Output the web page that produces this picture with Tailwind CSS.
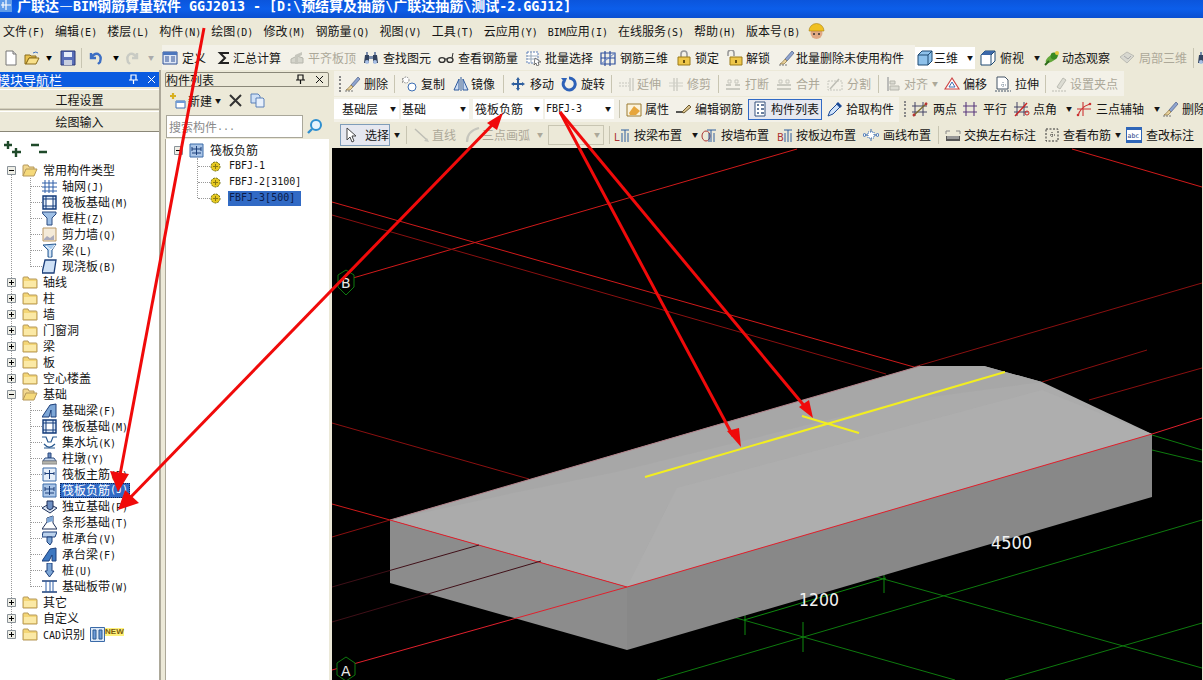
<!DOCTYPE html>
<html lang="zh-CN">
<head>
<meta charset="UTF-8">
<title>广联达钢筋算量软件</title>
<script src="https://cdn.jsdelivr.net/npm/@tailwindcss/browser@4"></script>
</head>
<body class="overflow-hidden">

<!-- icon sheet -->
<svg class="hidden">
  <symbol id="i-new" viewBox="0 0 16 16"><path d="M3 1h7l3 3v11H3z" fill="#fff" stroke="#777"/><path d="M10 1v3h3" fill="#ddd" stroke="#777"/></symbol>
  <symbol id="i-open" viewBox="0 0 16 16"><path d="M1 14V5h5l1 1h5v2H5L2 14z" fill="#e8c14e" stroke="#8a6d1c"/><path d="M2 14l3-6h10l-3 6z" fill="#f8e08a" stroke="#8a6d1c"/><path d="M9 3q3-2 5 0" fill="none" stroke="#3a6fc0"/></symbol>
  <symbol id="i-save" viewBox="0 0 16 16"><path d="M1 1h14v14H1z" fill="#5a6fb8" stroke="#2c3a78"/><path d="M4 2h8v5H4z" fill="#e8eefa"/><path d="M4 10h8v5H4z" fill="#c8cfe0"/></symbol>
  <symbol id="i-undo" viewBox="0 0 16 16"><path d="M3 3v5h5M3 8q3-5 7-4 4 2 2 8l-2 2" fill="none" stroke="#3d6fc4" stroke-width="2.4"/></symbol>
  <symbol id="i-redo" viewBox="0 0 16 16"><path d="M13 3v5H8M13 8q-3-5-7-4-4 2-2 8l2 2" fill="none" stroke="#c9cbc4" stroke-width="2.4"/></symbol>
  <symbol id="i-define" viewBox="0 0 16 16"><path d="M1 2h14v12H1z" fill="#dfe7f6" stroke="#2d4f94"/><path d="M1 2h14v3H1z" fill="#4c76bd"/><path d="M3 7h4M3 9h4M3 11h4M9 7h4M9 9h4M9 11h4" stroke="#2d4f94"/></symbol>
  <symbol id="i-sigma" viewBox="0 0 16 16"><path d="M13 3H4l5 5-5 5h9" fill="none" stroke="#222" stroke-width="2"/></symbol>
  <symbol id="i-flat" viewBox="0 0 16 16"><path d="M2 9l6-3 6 2v5H2z" fill="#d5d5cc" stroke="#b5b5ac"/><path d="M6 14V5l7-3v3l-4 2v7z" fill="#c6c6bd"/></symbol>
  <symbol id="i-find" viewBox="0 0 16 16"><path d="M2 5h4v8H1zM10 5h4l1 8h-5z" fill="#33435f"/><path d="M3 2h2v3H3zM11 2h2v3h-2zM6 6h4v3H6z" fill="#7a8cab"/><circle cx="4" cy="12" r="2" fill="#a9c0e6"/><circle cx="12" cy="12" r="2" fill="#a9c0e6"/></symbol>
  <symbol id="i-glasses" viewBox="0 0 16 16"><ellipse cx="4" cy="10" rx="3" ry="2.4" fill="none" stroke="#333" stroke-width="1.4"/><ellipse cx="12" cy="10" rx="3" ry="2.4" fill="none" stroke="#333" stroke-width="1.4"/><path d="M7 9h2M14 8l1-5" stroke="#333"/></symbol>
  <symbol id="i-batch" viewBox="0 0 16 16"><path d="M1 2h11v11H1z" fill="#fff" stroke="#5d7fb8" stroke-dasharray="2 1"/><path d="M1 6h11M1 9h11M5 2v11" stroke="#9ab" /><path d="M9 8l6 4-3 0 1 3-2 1-1-3-2 2z" fill="#fff" stroke="#444" stroke-width=".7"/></symbol>
  <symbol id="i-rebar3d" viewBox="0 0 16 16"><path d="M1 3h14v11H1zM5 1v15M10 1v15M1 8h14" fill="none" stroke="#2e4e9c" stroke-width="1.2"/><path d="M1 14L15 3" stroke="#5f7fc4"/></symbol>
  <symbol id="i-lock" viewBox="0 0 16 16"><path d="M5 7V4a3 3 0 016 0v3" fill="none" stroke="#999" stroke-width="1.6"/><path d="M2 7h12v8H2z" fill="#eec64a" stroke="#9b7a18"/><path d="M7 10h2v3H7z" fill="#6b5210"/></symbol>
  <symbol id="i-unlock" viewBox="0 0 16 16"><path d="M1 6V3a3 3 0 016 0v3" fill="none" stroke="#999" stroke-width="1.6"/><path d="M3 7h12v8H3z" fill="#eec64a" stroke="#9b7a18"/><path d="M8 10h2v3H8z" fill="#6b5210"/></symbol>
  <symbol id="i-brush" viewBox="0 0 16 16"><path d="M6 9l7-8 2 2-7 8z" fill="#8ea4cf" stroke="#4d5f88" stroke-width=".7"/><path d="M6 9l2 2-3 3-4 0q3-2 5-5z" fill="#e9d19a" stroke="#8a7340" stroke-width=".7"/><path d="M0 15h8" stroke="#777" stroke-dasharray="2 1"/></symbol>
  <symbol id="i-cube" viewBox="0 0 16 16"><path d="M1 5l4-4h10v10l-4 4H1z" fill="#8ec1ea" stroke="#1e4a72"/><path d="M1 5h10l4-4M11 5v10" fill="none" stroke="#1e4a72"/></symbol>
  <symbol id="i-cubetop" viewBox="0 0 16 16"><path d="M1 5l4-4h10v10l-4 4H1z" fill="#fff" stroke="#1e4a72"/><path d="M1 5l4-4h10l-4 4z" fill="#3b68a8"/><path d="M11 5v10M11 5l4-4" stroke="#1e4a72"/></symbol>
  <symbol id="i-orbit" viewBox="0 0 16 16"><ellipse cx="8" cy="8" rx="7.5" ry="3" transform="rotate(-35 8 8)" fill="#64a83c"/><circle cx="10" cy="6" r="3.4" fill="#3a8a22"/><circle cx="13" cy="3" r="2" fill="#e3c93e"/><path d="M1 15l4-4" stroke="#2c6a1a" stroke-width="2"/></symbol>
  <symbol id="i-local" viewBox="0 0 16 16"><path d="M1 7l7-5 7 4-7 7z" fill="#d8d8d0" stroke="#bcbcb4"/><path d="M5 6l4 3 3-3" fill="none" stroke="#aaa"/></symbol>
  <symbol id="i-copy" viewBox="0 0 16 16"><path d="M1 3h2M1 6h2M4 1v1" stroke="#555" stroke-dasharray="1 1"/><circle cx="5" cy="4" r="3" fill="#fff" stroke="#888" stroke-dasharray="1.5 1"/><circle cx="11" cy="11" r="4" fill="#fff" stroke="#3d6fb4"/></symbol>
  <symbol id="i-mirror" viewBox="0 0 16 16"><path d="M1 14L6 3v11zM15 14L10 3v11z" fill="#cfdef3" stroke="#2f5a9c"/><path d="M8 1v14" stroke="#2f5a9c"/></symbol>
  <symbol id="i-move" viewBox="0 0 16 16"><path d="M8 1l2 3H9v3h3V6l3 2-3 2V9H9v3h1l-2 3-2-3h1V9H4v1L1 8l3-2v1h3V4H6z" fill="#2f5f9e"/></symbol>
  <symbol id="i-rotate" viewBox="0 0 16 16"><path d="M8 2a6 6 0 11-5 3" fill="none" stroke="#2e62b8" stroke-width="3"/><path d="M0 2l6 0-2 5z" fill="#2e62b8"/></symbol>
  <symbol id="i-extend" viewBox="0 0 16 16"><path d="M1 7h10M1 10h10" stroke="#c6c6bd" stroke-dasharray="2 1"/><path d="M12 2v13M15 2v13" stroke="#bdbdb4"/></symbol>
  <symbol id="i-trim" viewBox="0 0 16 16"><path d="M6 2v13M9 2v13" stroke="#bdbdb4"/><path d="M1 7h14M1 10h14" stroke="#cfcfc6"/></symbol>
  <symbol id="i-break" viewBox="0 0 16 16"><path d="M1 9h5M10 9h5M1 13h14" stroke="#bdbdb4" stroke-width="1.5"/><path d="M3 4h3v3H3zM10 4h3v3h-3z" fill="none" stroke="#c6c6bd"/></symbol>
  <symbol id="i-merge" viewBox="0 0 16 16"><path d="M1 9h14M1 13h14" stroke="#bdbdb4" stroke-width="1.5"/><path d="M3 4h3v3H3zM10 4h3v3h-3z" fill="none" stroke="#c6c6bd"/></symbol>
  <symbol id="i-split" viewBox="0 0 16 16"><path d="M1 5h14v9H1z" fill="none" stroke="#c6c6bd" stroke-dasharray="2 1"/><path d="M3 13l9-10" stroke="#bdbdb4" stroke-width="1.5"/></symbol>
  <symbol id="i-align" viewBox="0 0 16 16"><path d="M2 1v14" stroke="#aaa" stroke-width="1.5"/><path d="M4 5h5v3H4zM4 10h9v4H4z" fill="#dcdcd3" stroke="#b5b5ac"/></symbol>
  <symbol id="i-offset" viewBox="0 0 16 16"><path d="M8 2l7 11H1z" fill="#fff" stroke="#c44" stroke-width="1.2"/><path d="M8 6l3 5H5z" fill="#fff" stroke="#3d6fb4"/></symbol>
  <symbol id="i-stretch" viewBox="0 0 16 16"><path d="M2 1h8l3 3v9H2z" fill="#fff" stroke="#456"/><path d="M8 6v6M6 9h5" stroke="#789" stroke-dasharray="1 1"/><path d="M0 15h16" stroke="#456" stroke-dasharray="2 1"/></symbol>
  <symbol id="i-grip" viewBox="0 0 16 16"><path d="M5 11l6-9 3 2-6 9z" fill="#dcdcd3" stroke="#bcbcb3"/><path d="M0 15h14" stroke="#bcbcb3" stroke-dasharray="2 1"/></symbol>
  <symbol id="i-prop" viewBox="0 0 16 16"><path d="M1 3h14v12H1z" fill="#fbf3dc" stroke="#9b7a30"/><path d="M3 12l5-7 6 5-4 4H4z" fill="#e6a53c"/></symbol>
  <symbol id="i-edit" viewBox="0 0 16 16"><path d="M0 11h7" stroke="#222" stroke-width="1.5"/><path d="M6 11l7-7 2 2-7 6z" fill="#d8c18c" stroke="#6b5a30"/></symbol>
  <symbol id="i-list" viewBox="0 0 16 16"><path d="M3 1h10v14H3z" fill="#fff" stroke="#37537f"/><path d="M5 4h2M9 4h3M5 8h2M9 8h3M5 12h2M9 12h3" stroke="#37537f" stroke-width="1.3"/></symbol>
  <symbol id="i-pick" viewBox="0 0 16 16"><path d="M1 15l2-5 7-7 3 3-7 7z" fill="#cfe2fa" stroke="#1c4a96"/><path d="M9 3l2-2 4 4-2 2z" fill="#1c4a96"/></symbol>
  <symbol id="i-two" viewBox="0 0 16 16"><path d="M3 1v14M11 1v14M0 5h15M0 11h15" stroke="#444466"/><path d="M1 15L15 2" stroke="#7a6a2a" stroke-width="1.2"/><circle cx="2" cy="14" r="1.4" fill="#b33"/><circle cx="14" cy="3" r="1.4" fill="#b33"/></symbol>
  <symbol id="i-par" viewBox="0 0 16 16"><path d="M4 1v14M12 1v14M1 5h14M1 11h14" stroke="#5a3a7e" stroke-width="1.1"/></symbol>
  <symbol id="i-angle" viewBox="0 0 16 16"><path d="M3 1v14M10 1v14M0 6h14M0 11h14" stroke="#444466"/><path d="M1 15L13 2" stroke="#c22" stroke-width="1.4"/><circle cx="13" cy="12" r="2" fill="none" stroke="#c22"/></symbol>
  <symbol id="i-three" viewBox="0 0 16 16"><path d="M2 15Q4 6 14 3M7 1v14M1 8h14" fill="none" stroke="#c33" stroke-width="1.1"/><circle cx="2" cy="14" r="1.3" fill="#c33"/><circle cx="14" cy="3" r="1.3" fill="#c33"/></symbol>
  <symbol id="i-cursor" viewBox="0 0 16 16"><path d="M4 1v12l3-3 2 5 2-1-2-5h4z" fill="#fff" stroke="#444"/></symbol>
  <symbol id="i-line" viewBox="0 0 16 16"><path d="M1 2l12 11" stroke="#bdbdb4" stroke-width="1.4"/><path d="M15 15l-5-1 3-3z" fill="#c6c6bd"/></symbol>
  <symbol id="i-arc" viewBox="0 0 16 16"><path d="M2 15Q2 4 14 1" fill="none" stroke="#c6c6bd" stroke-width="2.2"/></symbol>
  <symbol id="i-beam" viewBox="0 0 16 16"><text x="0" y="14" font-size="10" fill="#a33" font-family="DejaVu Sans">L</text><path d="M7 3h8M11 3v12M8 15V6M14 15V6" stroke="#2f5f9e" fill="none"/></symbol>
  <symbol id="i-wall" viewBox="0 0 16 16"><ellipse cx="5" cy="9" rx="4" ry="5" fill="none" stroke="#a33"/><path d="M6 3h9M10 3v12M8 15V6M13 15V6" stroke="#2f5f9e" fill="none"/></symbol>
  <symbol id="i-edge" viewBox="0 0 16 16"><text x="0" y="14" font-size="10" fill="#a33" font-family="DejaVu Sans">B</text><path d="M7 3h8M11 3v12M8 15V6M14 15V6" stroke="#2f5f9e" fill="none"/></symbol>
  <symbol id="i-draw" viewBox="0 0 16 16"><path d="M8 2v12M1 8h14" stroke="#3d6fb4"/><path d="M5 5h6v6H5z" fill="#fff" stroke="#3d6fb4" stroke-dasharray="1 1"/><circle cx="1.5" cy="8" r="1.4" fill="#fff" stroke="#3d6fb4"/><circle cx="14.5" cy="8" r="1.4" fill="#fff" stroke="#3d6fb4"/></symbol>
  <symbol id="i-swap" viewBox="0 0 16 16"><path d="M1 9h14v5H1z" fill="#555"/><path d="M3 9v3M5 9v3M7 9v3M9 9v3M11 9v3M13 9v3" stroke="#ddd"/><path d="M1 7V4h4M15 7V4h-4" fill="none" stroke="#888"/></symbol>
  <symbol id="i-view" viewBox="0 0 16 16"><path d="M2 2h12v12H2z" fill="none" stroke="#333" stroke-dasharray="2 1.5"/><path d="M8 5v6M6 8h5" stroke="#333" stroke-dasharray="1 1"/></symbol>
  <symbol id="i-abc" viewBox="0 0 16 16"><path d="M0 0h16v16H0z" fill="#2f66b8"/><path d="M1 3h14v10H1z" fill="#fff"/><text x="1.5" y="11" font-size="6.5" fill="#1c3f88" font-family="DejaVu Sans Mono">abc</text></symbol>
  <symbol id="t-plus" viewBox="0 0 9 9"><path d="M.5.5h8v8h-8z" fill="#eeeee6" stroke="#8a9299"/><path d="M2 4.5h5M4.5 2v5" stroke="#000"/></symbol>
  <symbol id="t-minus" viewBox="0 0 9 9"><path d="M.5.5h8v8h-8z" fill="#eeeee6" stroke="#8a9299"/><path d="M2 4.5h5" stroke="#000"/></symbol>
  <symbol id="t-folder" viewBox="0 0 16 13"><path d="M1 2q0-1 1-1h4l1 2h7q1 0 1 1v8H1z" fill="#f4d676" stroke="#b5985a"/><path d="M2 5h12v6H2z" fill="#fbe9a6"/></symbol>
  <symbol id="t-open" viewBox="0 0 16 13"><path d="M1 12V2q0-1 1-1h4l1 2h5v3" fill="#f2d890" stroke="#b5985a"/><path d="M1 12l3-7h11l-3 7z" fill="#f5d97a" stroke="#b5985a"/></symbol>
  <symbol id="n-grid" viewBox="0 0 15 15"><path d="M3 1v13M7 1v13M11 1v13M0 4h15M0 8h15M0 12h15" stroke="#2f5fa8"/></symbol>
  <symbol id="n-raft" viewBox="0 0 15 15"><path d="M1 1h13v13H1z" fill="#dce8f7" stroke="#123a7a" stroke-width="1.4"/><path d="M4 4h7v7H4zM1 4h3M11 4h3M1 11h3M11 11h3M4 1v3M11 1v3M4 11v3M11 11v3" fill="#fff" stroke="#123a7a"/></symbol>
  <symbol id="n-col" viewBox="0 0 15 15"><path d="M0 1h14v2l-4 4v7H5V7L1 3z" fill="#9fc0e6" stroke="#2a4a80"/></symbol>
  <symbol id="n-wall" viewBox="0 0 15 15"><path d="M1 1h13v13H1z" fill="#f4ead8" stroke="#b96"/><path d="M2 12l3-3 3 2 4-3v5H2z" fill="#aab"/></symbol>
  <symbol id="n-beam" viewBox="0 0 15 15"><path d="M1 2l13-1-4 6v7H6V7z" fill="#a9cbee" stroke="#2a5a90"/><path d="M8 7v7M4 3l5 4 4-5" fill="none" stroke="#fff"/></symbol>
  <symbol id="n-slab" viewBox="0 0 15 15"><path d="M3 1h11l-2 13H0z" fill="#cfe1f6" stroke="#1c3f7a" stroke-width="1.3"/></symbol>
  <symbol id="n-fbeam" viewBox="0 0 15 15"><path d="M0 14L8 2l6-1v13H9V7l-2 7z" fill="#7da6d6" stroke="#1c3f7a"/></symbol>
  <symbol id="n-pit" viewBox="0 0 15 15"><path d="M0 2h4l2 5h3l2-5h4M2 9q5 6 11 0M2 13h11" fill="none" stroke="#2a5a90" stroke-width="1.2"/></symbol>
  <symbol id="n-pier" viewBox="0 0 15 15"><path d="M6 2h3v5H6z" fill="#6b8cc0" stroke="#2a4a80"/><path d="M3 7h9l2 3H1z" fill="#c6d8ee" stroke="#2a4a80"/><path d="M0 10h15v3H0z" fill="#b5b5ac" stroke="#888"/></symbol>
  <symbol id="n-main" viewBox="0 0 15 15"><path d="M1 1h13v13H1z" fill="#e6eff9" stroke="#3a6aa8"/><path d="M7.500 3v9M3 6.500h9M3 5v3M12 5v3" stroke="#1c3f7a"/></symbol>
  <symbol id="n-neg" viewBox="0 0 15 15"><path d="M1 1h13v13H1z" fill="#a9c4e6" stroke="#3a6aa8"/><path d="M3 6h9M3 10h9M7.500 3v9M3 4v4M12 4v4" stroke="#1c3f7a"/></symbol>
  <symbol id="n-iso" viewBox="0 0 15 15"><path d="M0 9l7-4 8 4-7 5z" fill="#dbe5f3" stroke="#1c2f58"/><path d="M5 2h6v7l-3 2-3-2z" fill="#6e8fc2" stroke="#1c2f58"/></symbol>
  <symbol id="n-strip" viewBox="0 0 15 15"><path d="M0 14l5-7V3l6-2v7l4 6z" fill="#fff" stroke="#1c2f58"/><path d="M5 3l6-2v5l-6 2z" fill="#7da6d6"/></symbol>
  <symbol id="n-cap" viewBox="0 0 15 15"><path d="M1 1h14l-2 5H0z" fill="#bcd2ec" stroke="#1c3f7a"/><path d="M5 6h5v5l-2 3-3-3z" fill="#7da6d6" stroke="#1c3f7a"/></symbol>
  <symbol id="n-capb" viewBox="0 0 15 15"><path d="M0 14l8-12 6-1v13h-4V8l-3 6z" fill="#3e78c0" stroke="#1c3f7a"/></symbol>
  <symbol id="n-pile" viewBox="0 0 15 15"><path d="M5 0h5v8h2l-4.500 6L3 8h2z" fill="#7da6d6" stroke="#1c3f7a"/></symbol>
  <symbol id="n-band" viewBox="0 0 15 15"><path d="M0 2h15M0 13h15" stroke="#1c3f7a" stroke-width="1.5"/><path d="M4 2v11M8 2v11M11 2v11" stroke="#2f5fa8"/></symbol>
  <symbol id="n-gear" viewBox="0 0 11 11"><circle cx="5.500" cy="5.500" r="4.500" fill="#e6c820" stroke="#6b6b10" stroke-dasharray="2 1"/><path d="M3 5.500h5M5.500 3v5" stroke="#8a7a10"/></symbol>
</svg>

<div class="relative flex h-[680px] w-[1203px] flex-col overflow-hidden bg-[#ece9d8] text-[12px] leading-none text-[#151515] font-['Noto_Sans_CJK_SC',sans-serif] [&_i]:font-['DejaVu_Sans_Mono',monospace] [&_i]:text-[10px] [&_i]:not-italic">

  <!-- title bar -->
  <div class="flex h-[18px] flex-none items-start whitespace-pre bg-gradient-to-b from-[#0b55dc] via-[#0c5eea] to-[#0a4fd0] text-[14px] font-bold text-white [&_b]:font-['DejaVu_Sans_Mono',monospace] [&_b]:text-[13.3px]">
    <svg class="mr-[5px] h-[12px] w-[12px]" viewBox="0 0 12 12"><path d="M0 0h12v12H0z" fill="#5f9be8"/><path d="M6 0v10M1 5h10M3 2v6" stroke="#fff" stroke-width="1.2"/></svg><span class="-mt-[2px]">广联达—<b>BIM</b>钢筋算量软件<b> GGJ2013 - [D:\</b>预结算及抽筋<b>\</b>广联达抽筋<b>\</b>测试<b>-2.GGJ12]</b></span>
  </div>

  <!-- menu bar -->
  <div class="flex h-[27px] flex-none items-center gap-[10px] pl-[3px] *:flex-none">
    <span>文件<i>(F)</i></span>
    <span>编辑<i>(E)</i></span>
    <span>楼层<i>(L)</i></span>
    <span>构件<i>(N)</i></span>
    <span>绘图<i>(D)</i></span>
    <span>修改<i>(M)</i></span>
    <span>钢筋量<i>(Q)</i></span>
    <span>视图<i>(V)</i></span>
    <span>工具<i>(T)</i></span>
    <span>云应用<i>(Y)</i></span>
    <span><i>BIM</i>应用<i>(I)</i></span>
    <span>在线服务<i>(S)</i></span>
    <span>帮助<i>(H)</i></span>
    <span>版本号<i>(B)</i></span>
    <svg class="-ml-[2px] size-[17px]" viewBox="0 0 17 17"><circle cx="8.500" cy="10" r="6" fill="#e0a884"/><path d="M1 8a7.500 7.500 0 0115 0z" fill="#f0c020" stroke="#a88010" stroke-width=".6"/><circle cx="6" cy="11" r="1" fill="#333"/><circle cx="11" cy="11" r="1" fill="#333"/></svg>
  </div>

  <!-- standard toolbar -->
  <div class="flex h-[25px] flex-none items-center whitespace-nowrap pl-[3px] *:flex-none">
    <div class="w-[21px]"><svg class="size-4"><use href="#i-new"/></svg></div>
    <div class="w-[22px]"><svg class="size-4"><use href="#i-open"/></svg></div>
    <div class="w-[14px] text-[6px] text-black">▼</div>
    <div class="w-[21px]"><svg class="size-4"><use href="#i-save"/></svg></div>
    <div class="h-5 w-[7px] border-l border-[#c8c5b2]"></div>
    <div class="w-[25px]"><svg class="size-4"><use href="#i-undo"/></svg></div>
    <div class="w-[11px] text-[6px] text-black">▼</div>
    <div class="w-[24px]"><svg class="size-4"><use href="#i-redo"/></svg></div>
    <div class="w-[14px] text-[6px] text-[#aaa]">▼</div>
    <div class="flex h-[25px] items-center bg-[#f3f1e8] *:flex-none">
      <div class="flex w-[54px] items-center gap-1"><svg class="size-4"><use href="#i-define"/></svg>定义</div>
      <div class="flex w-[73px] items-center gap-px"><svg class="size-4"><use href="#i-sigma"/></svg>汇总计算</div>
      <div class="flex w-[74px] items-center gap-[3px] text-[#aca899]"><svg class="size-4"><use href="#i-flat"/></svg>平齐板顶</div>
      <div class="flex w-[75px] items-center gap-1"><svg class="size-4"><use href="#i-find"/></svg>查找图元</div>
      <div class="flex w-[88px] items-center gap-1"><svg class="size-4"><use href="#i-glasses"/></svg>查看钢筋量</div>
      <div class="flex w-[74px] items-center gap-[3px]"><svg class="size-4"><use href="#i-batch"/></svg>批量选择</div>
      <div class="flex w-[76px] items-center gap-1"><svg class="size-4"><use href="#i-rebar3d"/></svg>钢筋三维</div>
      <div class="flex w-[51px] items-center gap-[3px]"><svg class="size-4"><use href="#i-lock"/></svg>锁定</div>
      <div class="flex w-[52px] items-center gap-[3px]"><svg class="size-4"><use href="#i-unlock"/></svg>解锁</div>
      <div class="flex w-[136px] items-center gap-px"><svg class="size-4"><use href="#i-brush"/></svg>批量删除未使用构件</div>
    </div>
    <div class="flex h-[22px] w-[60px] items-center gap-px bg-white pl-[2px]"><svg class="size-4"><use href="#i-cube"/></svg>三维<span class="ml-[8px] text-[6px]">▼</span></div>
    <div class="flex w-[69px] items-center gap-1 pl-[5px]"><svg class="size-4"><use href="#i-cubetop"/></svg>俯视<span class="ml-[6px] text-[6px]">▼</span></div>
    <div class="flex w-[75px] items-center gap-[2px]"><svg class="size-4"><use href="#i-orbit"/></svg>动态观察</div>
    <div class="flex w-[74px] items-center gap-1 text-[#aca899]"><svg class="size-4"><use href="#i-local"/></svg>局部三维</div>
    <div class="h-5 w-1 border-l border-[#c8c5b2]"></div>
    <svg class="size-4"><use href="#i-find"/></svg>
  </div>

  <!-- body -->
  <div class="flex min-h-0 flex-1">

    <!-- module navigator -->
    <div class="flex w-[161px] flex-none flex-col border-r-2 border-[#aca899] pt-[2px]">
      <div class="flex h-[15px] flex-none items-center justify-between overflow-hidden bg-[#0a5be0] pr-[3px] text-[13px] text-white">
        <span class="-ml-[3px]">模块导航栏</span>
        <span class="flex items-center gap-2 text-[11px]"><svg class="size-[11px]" viewBox="0 0 11 11"><path d="M3 1h5v5H3zM1 6h9M5.500 6v4" fill="none" stroke="#fff" stroke-width="1.2"/></svg><svg class="size-[9px]" viewBox="0 0 9 9"><path d="M1 1l7 7M8 1L1 8" stroke="#fff"/></svg></span>
      </div>
      <div class="mt-[2px] flex h-[21px] flex-none items-center justify-center border-y border-b-[#aca899] border-t-white bg-[#ece9d8] shadow-[inset_0_-1px_0_#d4d0bc]">工程设置</div>
      <div class="mt-px flex h-[21px] flex-none items-center justify-center border-y border-b-[#8a8778] border-t-white bg-[#ece9d8]">绘图输入</div>
      <div class="relative min-h-0 flex-1 bg-white">
        <div class="flex h-[30px] items-center gap-[7px] pl-[3px] pt-[4px]">
          <svg class="size-[19px]" viewBox="0 0 19 19"><path d="M5 1v8M1 5h8M13 8v9M9 12h9" stroke="#1f4a2a" stroke-width="2.400"/></svg>
          <svg class="size-[19px]" viewBox="0 0 19 19"><path d="M2 5h8M10 12h8" stroke="#1f4a2a" stroke-width="2.400"/></svg>
        </div>

        <!-- tree connector lines -->
        <div class="absolute left-[11px] top-[38px] h-[464px] border-l border-dotted border-[#999]"></div>
        <div class="absolute left-[30px] top-[46px] h-[89px] border-l border-dotted border-[#999]"></div>
        <div class="absolute left-[30px] top-[270px] h-[185px] border-l border-dotted border-[#999]"></div>

        <div class="relative">
          <div class="flex h-4 items-center pl-[7px]"><svg class="size-[9px]"><use href="#t-minus"/></svg><svg class="ml-[6px] h-[13px] w-[16px]"><use href="#t-open"/></svg><span class="ml-[5px]">常用构件类型</span></div>
          <div class="flex h-4 items-center pl-[30px]"><span class="w-[12px] border-t border-dotted border-[#999]"></span><svg class="size-[15px]"><use href="#n-grid"/></svg><span class="ml-[5px]">轴网<i>(J)</i></span></div>
          <div class="flex h-4 items-center pl-[30px]"><span class="w-[12px] border-t border-dotted border-[#999]"></span><svg class="size-[15px]"><use href="#n-raft"/></svg><span class="ml-[5px]">筏板基础<i>(M)</i></span></div>
          <div class="flex h-4 items-center pl-[30px]"><span class="w-[12px] border-t border-dotted border-[#999]"></span><svg class="size-[15px]"><use href="#n-col"/></svg><span class="ml-[5px]">框柱<i>(Z)</i></span></div>
          <div class="flex h-4 items-center pl-[30px]"><span class="w-[12px] border-t border-dotted border-[#999]"></span><svg class="size-[15px]"><use href="#n-wall"/></svg><span class="ml-[5px]">剪力墙<i>(Q)</i></span></div>
          <div class="flex h-4 items-center pl-[30px]"><span class="w-[12px] border-t border-dotted border-[#999]"></span><svg class="size-[15px]"><use href="#n-beam"/></svg><span class="ml-[5px]">梁<i>(L)</i></span></div>
          <div class="flex h-4 items-center pl-[30px]"><span class="w-[12px] border-t border-dotted border-[#999]"></span><svg class="size-[15px]"><use href="#n-slab"/></svg><span class="ml-[5px]">现浇板<i>(B)</i></span></div>
          <div class="flex h-4 items-center pl-[7px]"><svg class="size-[9px]"><use href="#t-plus"/></svg><svg class="ml-[6px] h-[13px] w-[16px]"><use href="#t-folder"/></svg><span class="ml-[5px]">轴线</span></div>
          <div class="flex h-4 items-center pl-[7px]"><svg class="size-[9px]"><use href="#t-plus"/></svg><svg class="ml-[6px] h-[13px] w-[16px]"><use href="#t-folder"/></svg><span class="ml-[5px]">柱</span></div>
          <div class="flex h-4 items-center pl-[7px]"><svg class="size-[9px]"><use href="#t-plus"/></svg><svg class="ml-[6px] h-[13px] w-[16px]"><use href="#t-folder"/></svg><span class="ml-[5px]">墙</span></div>
          <div class="flex h-4 items-center pl-[7px]"><svg class="size-[9px]"><use href="#t-plus"/></svg><svg class="ml-[6px] h-[13px] w-[16px]"><use href="#t-folder"/></svg><span class="ml-[5px]">门窗洞</span></div>
          <div class="flex h-4 items-center pl-[7px]"><svg class="size-[9px]"><use href="#t-plus"/></svg><svg class="ml-[6px] h-[13px] w-[16px]"><use href="#t-folder"/></svg><span class="ml-[5px]">梁</span></div>
          <div class="flex h-4 items-center pl-[7px]"><svg class="size-[9px]"><use href="#t-plus"/></svg><svg class="ml-[6px] h-[13px] w-[16px]"><use href="#t-folder"/></svg><span class="ml-[5px]">板</span></div>
          <div class="flex h-4 items-center pl-[7px]"><svg class="size-[9px]"><use href="#t-plus"/></svg><svg class="ml-[6px] h-[13px] w-[16px]"><use href="#t-folder"/></svg><span class="ml-[5px]">空心楼盖</span></div>
          <div class="flex h-4 items-center pl-[7px]"><svg class="size-[9px]"><use href="#t-minus"/></svg><svg class="ml-[6px] h-[13px] w-[16px]"><use href="#t-open"/></svg><span class="ml-[5px]">基础</span></div>
          <div class="flex h-4 items-center pl-[30px]"><span class="w-[12px] border-t border-dotted border-[#999]"></span><svg class="size-[15px]"><use href="#n-fbeam"/></svg><span class="ml-[5px]">基础梁<i>(F)</i></span></div>
          <div class="flex h-4 items-center pl-[30px]"><span class="w-[12px] border-t border-dotted border-[#999]"></span><svg class="size-[15px]"><use href="#n-raft"/></svg><span class="ml-[5px]">筏板基础<i>(M)</i></span></div>
          <div class="flex h-4 items-center pl-[30px]"><span class="w-[12px] border-t border-dotted border-[#999]"></span><svg class="size-[15px]"><use href="#n-pit"/></svg><span class="ml-[5px]">集水坑<i>(K)</i></span></div>
          <div class="flex h-4 items-center pl-[30px]"><span class="w-[12px] border-t border-dotted border-[#999]"></span><svg class="size-[15px]"><use href="#n-pier"/></svg><span class="ml-[5px]">柱墩<i>(Y)</i></span></div>
          <div class="flex h-4 items-center pl-[30px]"><span class="w-[12px] border-t border-dotted border-[#999]"></span><svg class="size-[15px]"><use href="#n-main"/></svg><span class="ml-[5px]">筏板主筋<i>(R)</i></span></div>
          <div class="flex h-4 items-center pl-[30px]"><span class="w-[12px] border-t border-dotted border-[#999]"></span><svg class="size-[15px]"><use href="#n-neg"/></svg><span class="ml-[3px] flex h-[15px] items-center bg-[#316ac5] px-[2px] text-white outline-1 -outline-offset-1 outline-dotted outline-[#10265a]">筏板负筋<i>(J)</i></span></div>
          <div class="flex h-4 items-center pl-[30px]"><span class="w-[12px] border-t border-dotted border-[#999]"></span><svg class="size-[15px]"><use href="#n-iso"/></svg><span class="ml-[5px]">独立基础<i>(P)</i></span></div>
          <div class="flex h-4 items-center pl-[30px]"><span class="w-[12px] border-t border-dotted border-[#999]"></span><svg class="size-[15px]"><use href="#n-strip"/></svg><span class="ml-[5px]">条形基础<i>(T)</i></span></div>
          <div class="flex h-4 items-center pl-[30px]"><span class="w-[12px] border-t border-dotted border-[#999]"></span><svg class="size-[15px]"><use href="#n-cap"/></svg><span class="ml-[5px]">桩承台<i>(V)</i></span></div>
          <div class="flex h-4 items-center pl-[30px]"><span class="w-[12px] border-t border-dotted border-[#999]"></span><svg class="size-[15px]"><use href="#n-capb"/></svg><span class="ml-[5px]">承台梁<i>(F)</i></span></div>
          <div class="flex h-4 items-center pl-[30px]"><span class="w-[12px] border-t border-dotted border-[#999]"></span><svg class="size-[15px]"><use href="#n-pile"/></svg><span class="ml-[5px]">桩<i>(U)</i></span></div>
          <div class="flex h-4 items-center pl-[30px]"><span class="w-[12px] border-t border-dotted border-[#999]"></span><svg class="size-[15px]"><use href="#n-band"/></svg><span class="ml-[5px]">基础板带<i>(W)</i></span></div>
          <div class="flex h-4 items-center pl-[7px]"><svg class="size-[9px]"><use href="#t-plus"/></svg><svg class="ml-[6px] h-[13px] w-[16px]"><use href="#t-folder"/></svg><span class="ml-[5px]">其它</span></div>
          <div class="flex h-4 items-center pl-[7px]"><svg class="size-[9px]"><use href="#t-plus"/></svg><svg class="ml-[6px] h-[13px] w-[16px]"><use href="#t-folder"/></svg><span class="ml-[5px]">自定义</span></div>
          <div class="flex h-4 items-center pl-[7px]"><svg class="size-[9px]"><use href="#t-plus"/></svg><svg class="ml-[6px] h-[13px] w-[16px]"><use href="#t-folder"/></svg><span class="ml-[5px]"><i>CAD</i>识别</span>
            <svg class="ml-[5px] size-[15px]" viewBox="0 0 15 15"><path d="M.5.5h14v14H.5z" fill="#dce8f7" stroke="#3a6aa8"/><path d="M3 3h3v9H3zM9 3h3v9H9z" fill="#6e9bd8" stroke="#2a5a90"/></svg>
            <span class="-mt-[5px] bg-[#fff27a] text-[8px] font-bold text-[#7a5a10] font-['Liberation_Sans',sans-serif]">NEW</span>
          </div>
        </div>
      </div>
    </div>

    <!-- component list -->
    <div class="ml-[4px] flex w-[164px] flex-none flex-col pt-[2px]">
      <div class="flex h-[15px] flex-none items-center justify-between rounded-t-[2px] border border-[#8a8778] bg-[#ece9d8] pr-[4px] text-[12px]">
        <span class="pl-0">构件列表</span>
        <span class="flex items-center gap-[9px]"><svg class="size-[11px]" viewBox="0 0 11 11"><path d="M3 1h5v5H3zM1 6h9M5.500 6v4" fill="none" stroke="#111" stroke-width="1.2"/></svg><svg class="size-[9px]" viewBox="0 0 9 9"><path d="M1 1l7 7M8 1L1 8" stroke="#111"/></svg></span>
      </div>
      <div class="flex h-[27px] flex-none items-center pl-[4px]">
        <svg class="size-[17px]" viewBox="0 0 17 17"><path d="M4 1v6M1 4h6" stroke="#d8b020" stroke-width="2.200"/><path d="M7 9h9v7H7z" fill="#fff" stroke="#3d6fb4"/><path d="M7 9h9v2H7z" fill="#6e9bd8"/></svg>
        <span class="ml-[2px]">新建</span><span class="ml-[3px] text-[6px]">▼</span>
        <svg class="ml-[8px] size-[13px]" viewBox="0 0 13 13"><path d="M1 1l11 11M12 1L1 12" stroke="#333" stroke-width="2"/></svg>
        <svg class="ml-[8px] size-[15px]" viewBox="0 0 15 15"><path d="M1 1h7l2 2v7H1z" fill="#cfe0f6" stroke="#5a80b8"/><path d="M6 5h7l1 1v8H6z" fill="#e8f0fb" stroke="#5a80b8"/></svg>
      </div>
      <div class="flex h-[25px] flex-none items-center bg-[#ece9d8] pl-px">
        <div class="flex h-[23px] w-[137px] items-center border border-[#a9a79a] bg-white pl-[2px] text-[#8a8a8a]">搜索构件<i class="text-[10px]">...</i></div>
        <div class="flex w-[25px] justify-center"><svg class="size-[17px]" viewBox="0 0 17 17"><circle cx="9" cy="7" r="5" fill="#e8f3fc" stroke="#2f8fd0" stroke-width="2"/><path d="M5 11l-4 4" stroke="#2f8fd0" stroke-width="2.400"/></svg></div>
      </div>
      <div class="relative min-h-0 flex-1 border-l border-[#aca899] bg-white pt-[3px]">
        <div class="absolute left-[31px] top-[19px] h-[40px] border-l border-dotted border-[#999]"></div>
        <div class="flex h-4 items-center pl-[8px]"><svg class="size-[9px]"><use href="#t-minus"/></svg><svg class="ml-[6px] size-[15px]"><use href="#n-neg"/></svg><span class="ml-[6px]">筏板负筋</span></div>
        <div class="relative flex h-4 items-center pl-[32px]"><span class="w-[12px] border-t border-dotted border-[#999]"></span><svg class="size-[11px]"><use href="#n-gear"/></svg><i class="ml-[8px]">FBFJ-1</i></div>
        <div class="relative flex h-4 items-center pl-[32px]"><span class="w-[12px] border-t border-dotted border-[#999]"></span><svg class="size-[11px]"><use href="#n-gear"/></svg><i class="ml-[8px]">FBFJ-2[3100]</i></div>
        <div class="relative flex h-4 items-center pl-[32px]"><span class="w-[12px] border-t border-dotted border-[#999]"></span><svg class="size-[11px]"><use href="#n-gear"/></svg><i class="ml-[7px] flex h-[15px] items-center bg-[#316ac5] pl-px text-[#0b1b4a]">FBFJ-3[500]&nbsp;</i></div>
      </div>
    </div>

    <!-- drawing area with its toolbars -->
    <div class="ml-[3px] flex min-w-0 flex-1 flex-col whitespace-nowrap">

      <!-- edit toolbar -->
      <div class="flex h-[26px] flex-none items-center pl-[2px] pt-px">
        <div class="flex h-[25px] flex-none items-center bg-[#f3f1e8] pl-[6px] pr-[6px] text-[#151515] *:flex-none">
          <span class="-ml-px mr-[4px] h-[16px] w-[2px] border-l-2 border-dotted border-[#888]"></span>
          <div class="flex w-[49px] items-center gap-[3px]"><svg class="size-4"><use href="#i-brush"/></svg>删除</div>
          <div class="h-[18px] w-[7px] border-l border-[#c8c5b2]"></div>
          <div class="flex w-[52px] items-center gap-1"><svg class="size-4"><use href="#i-copy"/></svg>复制</div>
          <div class="flex w-[50px] items-center gap-[2px]"><svg class="size-4"><use href="#i-mirror"/></svg>镜像</div>
          <div class="h-[18px] w-[7px] border-l border-[#c8c5b2]"></div>
          <div class="flex w-[51px] items-center gap-1"><svg class="size-4"><use href="#i-move"/></svg>移动</div>
          <div class="flex w-[50px] items-center gap-1"><svg class="size-4"><use href="#i-rotate"/></svg>旋转</div>
          <div class="h-[18px] w-[7px] border-l border-[#c8c5b2]"></div>
          <div class="flex w-[50px] items-center gap-[3px] text-[#aca899]"><svg class="size-4"><use href="#i-extend"/></svg>延伸</div>
          <div class="flex w-[50px] items-center gap-[3px] text-[#aca899]"><svg class="size-4"><use href="#i-trim"/></svg>修剪</div>
          <div class="h-[18px] w-[7px] border-l border-[#c8c5b2]"></div>
          <div class="flex w-[51px] items-center gap-[4px] text-[#aca899]"><svg class="size-4"><use href="#i-break"/></svg>打断</div>
          <div class="flex w-[51px] items-center gap-[4px] text-[#aca899]"><svg class="size-4"><use href="#i-merge"/></svg>合并</div>
          <div class="flex w-[51px] items-center gap-[4px] text-[#aca899]"><svg class="size-4"><use href="#i-split"/></svg>分割</div>
          <div class="h-[18px] w-[8px] border-l border-[#c8c5b2]"></div>
          <div class="flex w-[58px] items-center gap-[2px] text-[#aca899]"><svg class="size-4"><use href="#i-align"/></svg>对齐<span class="ml-[2px] text-[6px]">▼</span></div>
          <div class="flex w-[51px] items-center gap-[3px]"><svg class="size-4"><use href="#i-offset"/></svg>偏移</div>
          <div class="flex w-[50px] items-center gap-1"><svg class="size-4"><use href="#i-stretch"/></svg>拉伸</div>
          <div class="h-[18px] w-[7px] border-l border-[#c8c5b2]"></div>
          <div class="flex items-center gap-[2px] text-[#aca899]"><svg class="size-4"><use href="#i-grip"/></svg>设置夹点</div>
        </div>
      </div>

      <!-- element toolbar -->
      <div class="flex h-[26px] flex-none items-center pl-[2px] *:flex-none">
        <div class="flex h-[25px] w-[565px] items-center bg-[#f3f1e8] *:flex-none">
          <div class="flex h-[20px] w-[65px] items-center justify-between bg-white pl-[8px] pr-[3px]">基础层<span class="text-[6px]">▼</span></div>
          <div class="ml-[2px] flex h-[20px] w-[68px] items-center justify-between bg-white pl-px pr-[3px]">基础<span class="text-[6px]">▼</span></div>
          <div class="ml-[4px] flex h-[20px] w-[70px] items-center justify-between bg-white pl-[2px] pr-[3px]">筏板负筋<span class="text-[6px]">▼</span></div>
          <div class="ml-[2px] flex h-[20px] w-[69px] items-center justify-between bg-white pl-px pr-[3px]"><i>FBFJ-3</i><span class="text-[6px]">▼</span></div>
          <div class="ml-[5px] h-[18px] w-[7px] border-l border-[#c8c5b2]"></div>
          <div class="flex w-[50px] items-center gap-[3px]"><svg class="size-4"><use href="#i-prop"/></svg>属性</div>
          <div class="flex w-[72px] items-center gap-[3px]"><svg class="size-4"><use href="#i-edit"/></svg>编辑钢筋</div>
          <div class="flex h-[21px] w-[74px] items-center gap-[3px] border border-[#316ac5] bg-[#e6e8f0] pl-[3px]"><svg class="size-4"><use href="#i-list"/></svg>构件列表</div>
          <div class="ml-[5px] flex items-center gap-[3px]"><svg class="size-4"><use href="#i-pick"/></svg>拾取构件</div>
        </div>
        <span class="ml-[5px] mr-[6px] h-[16px] w-[2px] border-l-2 border-dotted border-[#888]"></span>
        <div class="flex w-[50px] items-center gap-[5px]"><svg class="size-4"><use href="#i-two"/></svg>两点</div>
        <div class="flex w-[52px] items-center gap-[5px]"><svg class="size-4"><use href="#i-par"/></svg>平行</div>
        <div class="flex w-[62px] items-center gap-[3px]"><svg class="size-4"><use href="#i-angle"/></svg>点角<span class="ml-[6px] text-[6px]">▼</span></div>
        <div class="flex w-[87px] items-center gap-[4px]"><svg class="size-4"><use href="#i-three"/></svg>三点辅轴<span class="ml-[6px] text-[6px]">▼</span></div>
        <div class="flex items-center gap-[3px]"><svg class="size-4"><use href="#i-brush"/></svg>删除</div>
      </div>

      <!-- draw toolbar -->
      <div class="flex h-[26px] flex-none items-center pl-[8px] *:flex-none">
        <div class="flex h-[22px] w-[50px] items-center gap-[6px] border border-[#7f9db9] bg-[#e6e8f0] pl-[2px]"><svg class="size-4"><use href="#i-cursor"/></svg>选择</div>
        <span class="ml-[4px] w-[12px] text-[6px]">▼</span>
        <div class="h-[18px] w-[8px] border-l border-[#c8c5b2]"></div>
        <div class="flex w-[51px] items-center gap-[2px] text-[#aca899]"><svg class="size-4"><use href="#i-line"/></svg>直线</div>
        <div class="flex w-[83px] items-center gap-px text-[#aca899]"><svg class="size-4"><use href="#i-arc"/></svg>三点画弧<span class="ml-[6px] text-[6px]">▼</span></div>
        <div class="flex h-[20px] w-[56px] items-center justify-end border border-[#c8c5b2] bg-[#ece9d8] pr-[3px] text-[6px] text-[#aca899]">▼</div>
        <div class="ml-[5px] h-[18px] w-[5px] border-l border-[#c8c5b2]"></div>
        <div class="flex w-[87px] items-center gap-1"><svg class="size-4"><use href="#i-beam"/></svg>按梁布置<span class="ml-[6px] text-[6px]">▼</span></div>
        <div class="flex w-[76px] items-center gap-1"><svg class="size-4"><use href="#i-wall"/></svg>按墙布置</div>
        <div class="flex w-[86px] items-center gap-[3px]"><svg class="size-4"><use href="#i-edge"/></svg>按板边布置</div>
        <div class="flex w-[75px] items-center gap-1"><svg class="size-4"><use href="#i-draw"/></svg>画线布置</div>
        <div class="h-[18px] w-[7px] border-l border-[#c8c5b2]"></div>
        <div class="flex w-[99px] items-center gap-[3px]"><svg class="size-4"><use href="#i-swap"/></svg>交换左右标注</div>
        <div class="flex w-[82px] items-center gap-[3px]"><svg class="size-4"><use href="#i-view"/></svg>查看布筋<span class="ml-px text-[6px]">▼</span></div>
        <div class="flex items-center gap-[4px]"><svg class="size-4"><use href="#i-abc"/></svg>查改标注</div>
      </div>

      <!-- 3D view -->
      <svg class="block h-[532px] w-[870px] flex-none bg-black" viewBox="333 148 870 532">
        <!-- axis lines behind the slab -->
        <g fill="none" stroke-width="1">
          <path d="M333 202L915 367M347 280L798 149M1073 149L1203 187M333 504L391 520" stroke="#d01a1a"/>
          <path d="M333 215L887 374M333 423L530 479M333 537L391 520M915 367L1203 283M1043 382L1148 350M1090 400L1203 368" stroke="#8a1010"/>
          <path d="M628 587L956 680M770 547L1203 668M658 680L1203 520M1006 680L1203 623M1153 435L1203 450M1153 450L1203 462" stroke="#0e7a0e"/>
          <path d="M745 620L887 578M885 565V593M746 608V635M804 622V652" stroke="#0e8a0e"/>
        </g>
        <!-- slab -->
        <path d="M391 520L628 587V650L391 583z" fill="#8c8c8c"/>
        <path d="M628 587L1153 434V497L628 650z" fill="#888888"/>
        <path d="M391 520L921 366H985L1043 382L1153 434L628 587z" fill="#ababab"/>
        <path d="M391 520L921 366H985L1043 382L910 400L617 472L514 493z" fill="#a7a7a7"/>
        <path d="M628 587L678 488L1043 390L1153 434z" fill="#aeaeae"/>
        <!-- edges and axis lines over the slab -->
        <g fill="none" stroke-width="1">
          <path d="M391 520L921 366" stroke="#b08088"/>
          <path d="M333 670L628 587L1153 434L1203 418M391 520L628 587" stroke="#e0202c"/>
          <path d="M333 587L480 545M333 622L542 561" stroke="#401018"/>
        </g>
        <path d="M646 477L1006 372M803 416L860 433" fill="none" stroke="#f2ee20" stroke-width="2"/>
        <text x="992" y="549" fill="#f2f2f2" font-size="17" font-family="DejaVu Sans" textLength="41" lengthAdjust="spacingAndGlyphs">4500</text>
        <text x="800" y="606" fill="#f2f2f2" font-size="17" font-family="DejaVu Sans" textLength="40" lengthAdjust="spacingAndGlyphs">1200</text>
        <path d="M347 270L355 275V287L347 295L339 287V275z" fill="#000" stroke="#0e7a0e"/>
        <text x="342" y="288" fill="#e8e8e8" font-size="14" font-family="DejaVu Sans">B</text>
        <path d="M347 657L356 663V675L347 681L338 675V663z" fill="#000" stroke="#0e7a0e"/>
        <text x="342" y="676" fill="#e8e8e8" font-size="14" font-family="DejaVu Sans">A</text>
      </svg>
    </div>
  </div>

  <!-- hand drawn red arrows over everything -->
  <svg class="pointer-events-none absolute inset-0 h-[680px] w-[1203px]" viewBox="0 0 1203 680">
    <g stroke="#f00a0a" stroke-width="3" fill="none">
      <path d="M204 28L120 475"/>
      <path d="M497 120L125 503"/>
      <path d="M560 112L733 436"/>
      <path d="M560 112L806 408"/>
    </g>
    <g fill="#f00a0a">
      <path d="M118 492L110 471L129 474z"/>
      <path d="M503 113L487 123L497 130z"/>
      <path d="M118 510L125 490L139 503z"/>
      <path d="M741 447L727 431L739 428z"/>
      <path d="M813 418L799 407L809 400z"/>
    </g>
  </svg>
</div>

</body>
</html>
